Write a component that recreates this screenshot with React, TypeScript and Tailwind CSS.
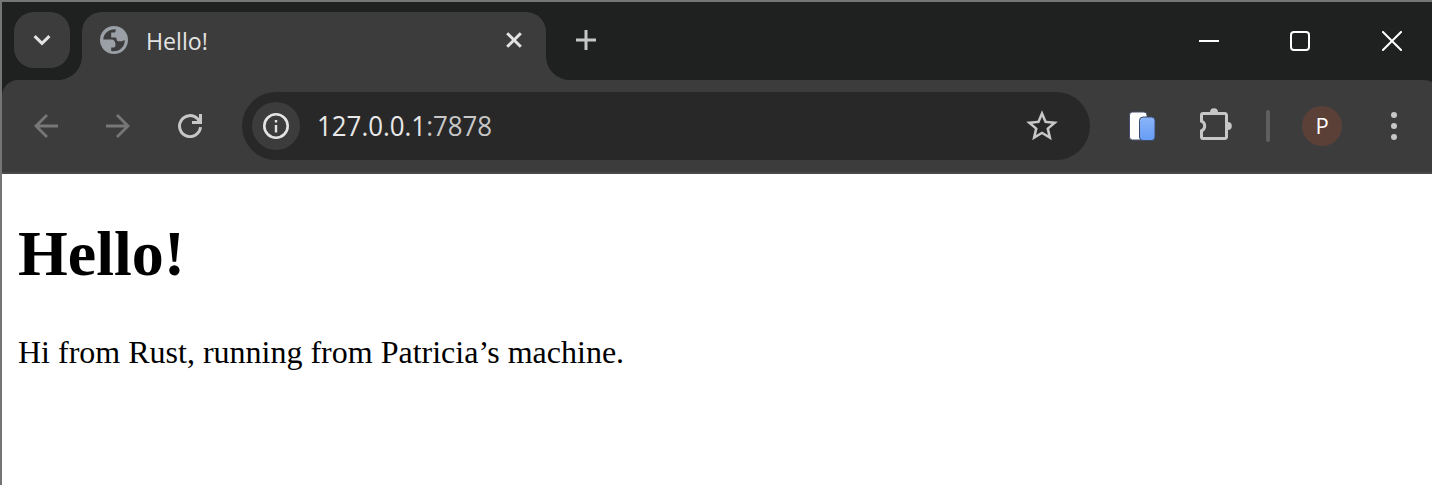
import React from "react";

function Globe() {
  return (
    <svg className="block size-7" viewBox="0 0 28 28" fill="none">
      <circle cx="14" cy="14" r="14" fill="#9aa0a6" />
      <path d="M3.3 13.6C3.5 7.8 8 3.4 15.6 3.3v1.6c0 1.1-.7 1.7-1.8 1.7h-2.6v4.8h3.6c1.3 0 1.8.6 1.8 1.6 0 1.5.9 2.3 2.3 2.3h2.3c1.2 0 1.9-.4 2.3-1h1.2c.1 6.3-4.6 11-11 11-.8 0-1.7-.1-2.5-.3v-3.5h2.3c1.3 0 1.9-.8 1.9-2v-1.6c0-2.6-1.5-4.3-4-4.3z" fill="#3c3c3c" />
    </svg>
  );
}

function TabStrip() {
  return (
    <div className="flex h-[78px] shrink-0 items-start bg-[#1f2120] pt-[10px]">
      <button className="ml-3 flex size-14 items-center justify-center rounded-[20px] bg-[#3c3c3c]">
        <svg className="size-7" viewBox="0 0 28 28" fill="none" stroke="#e3e3e3" strokeWidth="3">
          <path d="M6.6 10.2 14 17.4l7.4-7.2" />
        </svg>
      </button>
      <svg className="mt-11 ml-[-12px] h-6 w-6 shrink-0" viewBox="0 0 24 24">
        <path d="M24 0v24H0C13.3 24 24 13.3 24 0z" fill="#3c3c3c" />
      </svg>
      <div className="flex h-[68px] w-[464px] shrink-0 items-start rounded-t-[20px] bg-[#3c3c3c] pt-[14px] pr-[18px] pl-[18px]">
        <Globe />
        <span className="ml-[18px] w-[300px] origin-left scale-x-[0.966] font-['Open_Sans',sans-serif] text-[24px] leading-[30px] text-[#e3e3e3]">Hello!</span>
        <svg className="ml-auto size-7" viewBox="0 0 28 28" fill="none" stroke="#e3e3e3" strokeWidth="3">
          <path d="m7.2 7.2 13.6 13.6M20.8 7.2 7.2 20.8" />
        </svg>
      </div>
      <svg className="mt-11 h-6 w-6 shrink-0" viewBox="0 0 24 24">
        <path d="M0 0v24h24C10.7 24 0 13.3 0 0z" fill="#3c3c3c" />
      </svg>
      <svg className="mt-[18px] ml-[6px] h-5 w-5" viewBox="0 0 20 20" fill="none" stroke="#c7c7c7" strokeWidth="3">
        <path d="M0 10h20M10 0v20" />
      </svg>
      <div className="mt-[19px] ml-auto flex pr-[30px]">
        <svg className="h-5 w-5" viewBox="0 0 20 20">
          <path d="M0 9h20v2H0z" fill="#fff" />
        </svg>
        <svg className="ml-[71px] h-5 w-5" viewBox="0 0 20 20" fill="none" stroke="#fff" strokeWidth="2">
          <rect x="1" y="1" width="18" height="18" rx="3" />
        </svg>
        <svg className="ml-[72px] h-5 w-5" viewBox="0 0 20 20" fill="none" stroke="#fff" strokeWidth="2">
          <path d="m.3.3 19.4 19.4M19.7.3.3 19.7" />
        </svg>
      </div>
    </div>
  );
}

function AddressBar() {
  return (
    <div className="ml-10 flex h-[68px] w-[848px] shrink-0 items-center rounded-full bg-[#282828] pl-[10px]">
      <div className="flex size-12 items-center justify-center rounded-full bg-[#3c3c3c]">
        <svg className="size-[26px]" viewBox="0 0 26 26">
          <circle cx="13" cy="13" r="11.7" fill="none" stroke="#e3e3e3" strokeWidth="2.6" />
          <path d="M11.8 12h2.4v7.6h-2.4zM11.8 7h2.4v2.4h-2.4z" fill="#e3e3e3" />
        </svg>
      </div>
      <div className="mb-[2px] ml-[17px] w-[300px] origin-left scale-x-[0.924] font-['Open_Sans',sans-serif] text-[28px] leading-[36px] text-[#e8e8e8]">
        127.0.0.1<span className="text-[#c7c7c7]">:7878</span>
      </div>
      <svg className="mr-[29px] ml-auto size-[38px]" viewBox="0 0 24 24" fill="#c7c7c7">
        <path d="M22 9.24l-7.19-.62L12 2 9.19 8.63 2 9.24l5.46 4.73L5.82 21 12 17.27 18.18 21l-1.63-7.03L22 9.24zM12 15.4l-3.76 2.27 1-4.28-3.32-2.88 4.38-.38L12 6.1l1.71 4.04 4.38.38-3.32 2.88 1 4.28L12 15.4z" />
      </svg>
    </div>
  );
}

function Toolbar() {
  return (
    <div className="shrink-0 bg-[#1f2120]">
      <div className="-mr-2 flex h-[94px] items-center rounded-t-[16px] border-b-2 border-[#4a4848] bg-[#3c3c3c] pl-8">
        <svg className="h-6 w-6" viewBox="0 0 24 24" fill="none" stroke="#777" strokeWidth="2.8">
          <path d="M24 12H2M13 1 2 12l11 11" />
        </svg>
        <svg className="ml-12 h-6 w-6" viewBox="0 0 24 24" fill="none" stroke="#777" strokeWidth="2.8">
          <path d="M0 12h22M11 1l11 11-11 11" />
        </svg>
        <svg className="ml-12 h-6 w-6" viewBox="0 0 24 24" fill="none" stroke="#c7c7c7" strokeWidth="3">
          <path d="M22.5 13.2A10.5 10.5 0 1 1 19.6 4.8L22 8M22.5 0v8.5H14" />
        </svg>
        <AddressBar />
        <svg className="ml-[37px] h-8 w-8 shrink-0" viewBox="0 0 32 32">
          <defs>
            <linearGradient id="page" x1="0" y1="0" x2="0" y2="1">
              <stop offset="0" stopColor="#8ab4f8" />
              <stop offset="1" stopColor="#669df6" />
            </linearGradient>
          </defs>
          <rect x="2.5" y="2" width="17.5" height="28" rx="3" fill="#fff" stroke="#46506e" strokeWidth="1" />
          <rect x="12.5" y="7" width="15.5" height="23.5" rx="3.5" fill="url(#page)" stroke="#3c4868" strokeWidth="1" />
        </svg>
        <svg className="mb-1 ml-[41px] h-8 w-8 shrink-0" viewBox="0 0 32 32">
          <path d="M3 5.5h22a1.5 1.5 0 0 1 1.5 1.5v22a1.5 1.5 0 0 1-1.5 1.5H3A1.5 1.5 0 0 1 1.5 29v-6.2a5.2 5.2 0 0 0 0-9.6V7A1.5 1.5 0 0 1 3 5.5z" fill="none" stroke="#c7c7c7" strokeWidth="3" />
          <path d="M10 4.2a4 4 0 0 1 8 0zM27.8 14a4 4 0 0 1 0 8z" fill="#c7c7c7" />
        </svg>
        <div className="ml-[34px] h-8 w-1 shrink-0 rounded-full bg-[#5f5f5f]" />
        <div className="ml-8 flex size-10 shrink-0 items-center justify-center rounded-full bg-[#5b4038] pb-[2px] font-['Open_Sans',sans-serif] text-[22px] text-white">P</div>
        <svg className="ml-[48px] h-8 w-2 shrink-0" viewBox="0 0 8 32" fill="#c7c7c7">
          <circle cx="4" cy="5" r="3" />
          <circle cx="4" cy="16" r="3" />
          <circle cx="4" cy="27" r="3" />
        </svg>
      </div>
    </div>
  );
}

export default function App() {
  return (
    <div className="flex h-[485px] w-[1432px] flex-col overflow-hidden border-t-2 border-l-2 border-[#757575] bg-white">
      <TabStrip />
      <Toolbar />
      <main className="px-4 pt-[43px] font-['Liberation_Serif',serif] text-black">
        <h1 className="text-[64px] leading-[74px] font-bold">Hello!</h1>
        <p className="mt-[43px] text-[32px] leading-[37px]">Hi from Rust, running from Patricia’s machine.</p>
      </main>
    </div>
  );
}
